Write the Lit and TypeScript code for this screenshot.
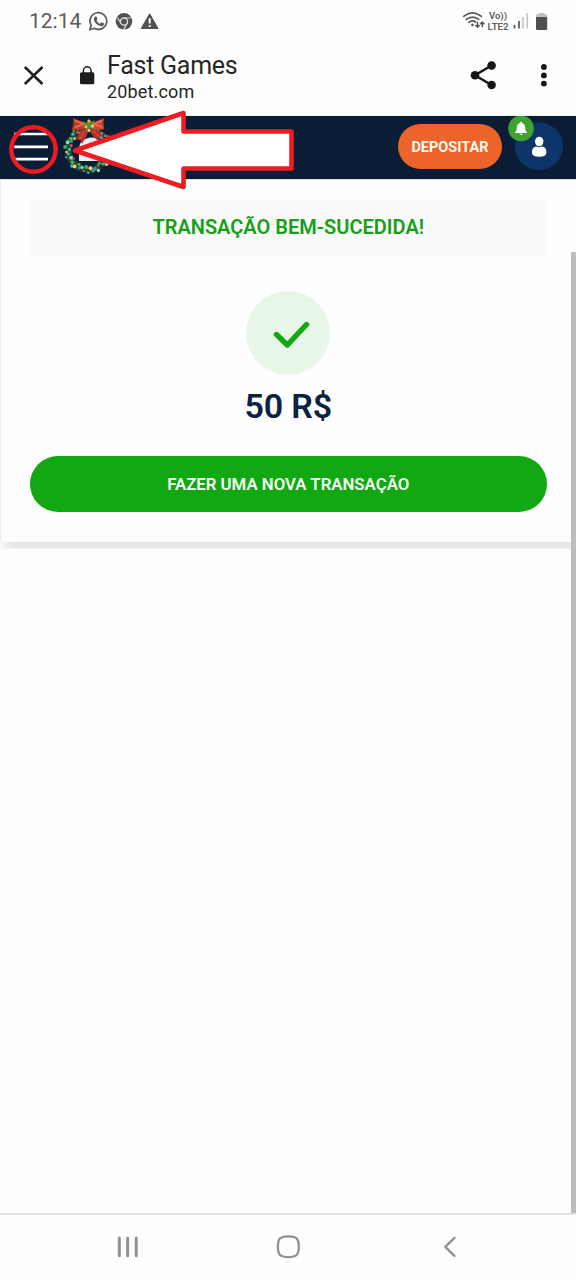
import { LitElement, html, svg, css } from 'lit';
import { customElement } from 'lit/decorators.js';

const lights = ['#46b7c9', '#3fae52', '#e0483a', '#8fdc9c', '#3a8fc4', '#49b356', '#f0c878'];

@customElement('status-bar')
class StatusBar extends LitElement {
  static styles = css`
    :host { display: flex; height: 42px; box-sizing: border-box; padding: 0 28px 0 29px; align-items: center; color: #5b5b5b; }
    .time { font-size: 21px; line-height: 24px; width: 59px; letter-spacing: 0; }
    svg { display: block; flex: none; }
    .space { flex: 1; }
    .volte { font-size: 9.6px; font-weight: 600; width: 24px; margin-left: 1px; white-space: nowrap; text-align: center; letter-spacing: 0; }
    .volte div { line-height: 11px; }
  `;
  render() {
    return html`
      <span class="time">12:14</span>
      <svg width="76" height="24" viewBox="88 9 76 24">
        <path d="M89.8 29.8 L91.1 25.2 A8.4 8.4 0 1 1 94.2 28.3 Z" fill="none" stroke="#5b5b5b" stroke-width="1.7" stroke-linejoin="round"/>
        <path d="M95.2 16.4 l1.2 0 1.1 2.7 -1 1.4 q1.5 2.5 3.6 3.3 l1.4 -1.5 2.6 1.3 q0 2.7 -2.9 2.7 q-3.3 -.5 -5.8 -3.3 q-3 -4.3 -.2 -6.6z" fill="#5b5b5b"/>
        <circle cx="124" cy="21.3" r="8.3" fill="#505050"/>
        <circle cx="124" cy="21.6" r="3.6" fill="none" stroke="#ddd" stroke-width="1.3"/>
        <path d="M124 18 H131 M121 23.4 L117.6 17.8 M127 23.4 L123.8 29.2" fill="none" stroke="#ddd" stroke-width="1.2"/>
        <path d="M149.7 13.8 L158 28.5 H141.2 Z" fill="#505050" stroke="#505050" stroke-width="1" stroke-linejoin="round"/>
        <path d="M149.7 18.2 V23.6 M149.7 25.2 V27" stroke="#fff" stroke-width="2"/>
      </svg>
      <span class="space"></span>
      <svg width="23" height="20" viewBox="462 11 23 20">
        <g fill="none" stroke="#555" stroke-width="1.7" stroke-linecap="round">
          <path d="M463.6 16.3 Q472.5 9.4 481.4 16.3"/>
          <path d="M466.3 19.4 Q472.5 14.7 478.7 19.4"/>
          <path d="M469 22.3 Q472.5 19.7 475.5 22"/>
        </g>
        <circle cx="472.4" cy="24.9" r="1.3" fill="#555"/>
        <path d="M477.5 21.8 V27 M475.4 25 L477.5 27.2 L479.6 25 M482.3 27.2 V22.2 M480.2 24.2 L482.3 22 L484.4 24.2" fill="none" stroke="#555" stroke-width="1.5"/>
      </svg>
      <div class="volte"><div>Vo))</div><div>LTE2</div></div>
      <svg width="38" height="20" viewBox="510 11 38 20">
        <path d="M514.5 25 V28.5 M519 21 V28.5" stroke="#555" stroke-width="1.7"/>
        <path d="M523 17 V28.5 M527.3 13 V28.5" stroke="#c4c4c4" stroke-width="1.6"/>
        <path d="M536 17 V15.4 Q536 14.3 537.2 14.3 H538.8 V13 H544.3 V14.3 H546 Q547.2 14.3 547.2 15.4 V17Z" fill="#c0c0c0"/>
        <path d="M536 17 H547.2 V28.7 Q547.2 30 546 30 H537.2 Q536 30 536 28.7Z" fill="#505050"/>
      </svg>
    `;
  }
}

@customElement('browser-bar')
class BrowserBar extends LitElement {
  static styles = css`
    :host { display: flex; height: 74px; box-sizing: border-box; padding: 0 25px 0 22px; align-items: flex-start; color: #262626; border-bottom: 1px solid #e9f1f5; }
    svg { display: block; flex: none; }
    .names { margin-left: 11px; padding-top: 8px; flex: 1; white-space: nowrap; }
    .title { font-size: 25px; line-height: 31px; letter-spacing: -0.25px; }
    .site { font-size: 18px; line-height: 21px; letter-spacing: 0.15px; }
  `;
  render() {
    return html`
      <svg width="74" height="66" viewBox="22 42 74 66">
        <path d="M24.8 67 L42.5 84 M42.5 67 L24.8 84" stroke="#202020" stroke-width="2.6"/>
        <rect x="80" y="72.3" width="14.3" height="12" rx="1.5" fill="#1d1d1d"/>
        <path d="M83.4 73 V70.6 a3.8 3.8 0 0 1 7.6 0 V73" fill="none" stroke="#1d1d1d" stroke-width="1.5"/>
      </svg>
      <div class="names">
        <div class="title">Fast Games</div>
        <div class="site">20bet.com</div>
      </div>
      <svg width="84" height="66" viewBox="467 42 84 66">
        <path d="M491.5 65.5 L475 75.2 L491.5 85" fill="none" stroke="#161616" stroke-width="2.5"/>
        <g fill="#161616">
          <circle cx="491.6" cy="65.5" r="4.3"/><circle cx="475" cy="75.2" r="4.3"/><circle cx="491.6" cy="85" r="4.3"/>
          <circle cx="543.9" cy="67" r="2.9"/><circle cx="543.9" cy="75.4" r="2.9"/><circle cx="543.9" cy="83.6" r="2.9"/>
        </g>
      </svg>
    `;
  }
}

@customElement('site-header')
class SiteHeader extends LitElement {
  static styles = css`
    :host { display: flex; height: 63px; background: #0b1d35; align-items: flex-start; border-bottom: 1px solid #d5e2ec; }
    svg { display: block; flex: none; }
    .space { flex: 1; }
    .deposit { margin: 8px 6px 0 0; width: 104px; height: 45px; border: 0; padding: 2px 0 0; border-radius: 23px; background: #ed642b; color: #fff8ee; font: 700 14.5px/43px Roboto, sans-serif; white-space: nowrap; text-align: center; }
    .account { margin-right: 7px; }
  `;
  render() {
    const dots = Array.from({ length: 56 }, (_, i) => {
      const a = i * 0.3366;
      const r = 17.5 + ((i * 7) % 5) * 1.45;
      return svg`<circle cx=${88.3 + r * Math.cos(a)} cy=${149.5 + r * Math.sin(a)} r=${1.3 + (i % 3) * 0.35} fill=${lights[(i * 3) % 7]}/>`;
    });
    return html`
      <svg width="130" height="63" viewBox="0 116 130 63">
        <path d="M14.3 134 H48 M14.3 146.8 H48 M14.3 159.2 H48" stroke="#fff" stroke-width="2.7"/>
        <circle cx="88.3" cy="149.5" r="20" fill="none" stroke="#1f4a35" stroke-width="6.5" stroke-dasharray="5 1.3"/>
        ${dots}
        <circle cx="91" cy="149" r="14" fill="#0b1d35"/>
        <path d="M79 161 V154 Q78 145 82 141 Q88 136 97 138 L104 144 V161Z" fill="#e9edf3"/>
        <path d="M85 126 Q79 132 76 140 L80.5 139.5 L82 144 Q86 138 89 130 Q92 136 98 141 L99 136.5 L104 137 Q100 130 92 126Z" fill="#b53224"/>
        <path d="M84 131 L80 139.5 M93 131 L98.5 136" stroke="#e2583e" stroke-width="1"/>
        <path d="M88 124 L73 118 Q74.5 124 71.5 129.5 Q80 131.5 88 126Z" fill="#c23a27"/>
        <path d="M90 124 L104 118 Q102.5 124 104.5 129 Q97 131 90 126Z" fill="#cf4430"/>
        <path d="M75 120.5 L84 124 L75 127.5 M102 120.5 L94 124 L102 127" fill="none" stroke="#f0714f" stroke-width="1.6"/>
        <path d="M82 121 L87 123 L88 118.5 L91 122 L95 120 L92 125 L96 130 L90 128 L86 133 L86 127 L81 128 L85 125Z" fill="#628b2d"/>
        <circle cx="89" cy="121" r="1.6" fill="#e6bd45"/><circle cx="92.5" cy="126" r="1.6" fill="#e8d48a"/><circle cx="86" cy="127" r="1.4" fill="#e2c262"/><circle cx="89" cy="130.5" r="1.2" fill="#f0e6cf"/>
      </svg>
      <span class="space"></span>
      <button class="deposit">DEPOSITAR</button>
      <svg class="account" width="61" height="63" viewBox="508 116 61 63">
        <circle cx="539" cy="146.3" r="24" fill="#0e3569"/>
        <ellipse cx="539.2" cy="141.5" rx="4.2" ry="4.8" fill="#fff"/>
        <path d="M532 152 Q531.8 147 536.6 146.4 Q539.2 148 541.8 146.4 Q546.6 147 546.4 152 Q547 156.8 539.2 156.8 Q531.4 156.8 532 152Z" fill="#fff"/>
        <circle cx="521" cy="128.4" r="12.8" fill="#3fa32f"/>
        <path d="M521 121.8 q1 0 1.2 1.2 q3 1.2 3 5 q0 3.4 1.8 4.3 v.8 h-12 v-.8 q1.8 -.9 1.8 -4.3 q0 -3.8 3 -5 q.2 -1.2 1.2 -1.2z" fill="#fff"/>
        <path d="M519.2 133.8 h3.6 q-1.8 2.4 -3.6 0z" fill="#fff"/>
      </svg>
    `;
  }
}

@customElement('nav-bar')
class NavBar extends LitElement {
  static styles = css`
    :host { display: flex; height: 67px; box-sizing: border-box; border-top: 2px solid #e3e3e3; justify-content: center; background: #fefefe; }
    svg { display: block; }
  `;
  render() {
    return html`
      <svg width="576" height="65" viewBox="0 1215 576 65" fill="none" stroke="#929292" stroke-linecap="round" stroke-linejoin="round">
        <path d="M119.3 1238 V1255.7 M127.6 1238 V1255.7 M136.2 1238 V1255.7" stroke-width="3"/>
        <path d="M288.3 1236.3 C296.5 1236.3 298.8 1238.5 298.8 1246.7 C298.8 1254.9 296.5 1257.1 288.3 1257.1 C280.1 1257.1 277.9 1254.9 277.9 1246.7 C277.9 1238.5 280.1 1236.3 288.3 1236.3Z" stroke-width="2.3"/>
        <path d="M454.5 1237.8 L445.3 1246.8 L454.5 1256" stroke-width="2.4"/>
      </svg>
    `;
  }
}

@customElement('app-root')
class AppRoot extends LitElement {
  static styles = css`
    :host { display: flex; flex-direction: column; position: relative; width: 576px; height: 1280px; overflow: hidden; background: #fefefe; font-family: Roboto, sans-serif; }
    .page { flex: 1; display: flex; min-height: 0; }
    .view { flex: 1; overflow: hidden; }
    .clip { height: 369px; overflow: hidden; }
    .card { height: 362px; box-sizing: border-box; border-left: 1px solid #ebebeb; border-radius: 0 0 0 4px; padding: 20px 24px 0 28.5px; background: #fefefe; box-shadow: 8px 7px 12px 4px rgba(0, 0, 0, 0.1); display: flex; flex-direction: column; align-items: center; white-space: nowrap; }
    .banner { width: 100%; height: 56px; background: #fafafa; color: #16a016; font-size: 20px; font-weight: 600; line-height: 54px; text-align: center; }
    .check { margin: 35px 1px 0 0; display: block; }
    .amount { margin-top: 11px; height: 40px; line-height: 40px; font-size: 34px; font-weight: 600; letter-spacing: -0.2px; color: #0a2341; }
    .again { margin-top: 30px; width: 100%; height: 56px; border: 0; padding: 0; border-radius: 28px; background: #11a812; color: #f7fff7; font: 600 16.8px/56px Roboto, sans-serif; }
    .rail { width: 5px; padding-top: 72px; display: flex; z-index: 1; }
    .thumb { flex: 1; background: #bdbdbd; }
    .marks { position: absolute; left: 0; top: 100px; pointer-events: none; }
  `;
  render() {
    return html`
      <status-bar></status-bar>
      <browser-bar></browser-bar>
      <site-header></site-header>
      <div class="page">
        <div class="view">
          <div class="clip">
            <div class="card">
              <div class="banner">TRANSAÇÃO BEM-SUCEDIDA!</div>
              <svg class="check" width="84" height="84" viewBox="246 291 84 84">
                <circle cx="288" cy="333" r="42" fill="#e7f6e7"/>
                <path d="M276.5 334.5 L287.3 345 L306.5 324.5" fill="none" stroke="#11a812" stroke-width="5.4" stroke-linecap="round" stroke-linejoin="round"/>
              </svg>
              <div class="amount">50 R$</div>
              <button class="again">FAZER UMA NOVA TRANSAÇÃO</button>
            </div>
          </div>
        </div>
        <div class="rail"><div class="thumb"></div></div>
      </div>
      <nav-bar></nav-bar>
      <svg class="marks" width="300" height="100" viewBox="0 100 300 100" stroke="#ed1c24">
        <circle cx="33.5" cy="149.5" r="22.2" fill="none" stroke-width="4.4"/>
        <path d="M75 150.5 L183.5 113 V131.5 H291.5 V168.5 H183.5 V187 Z" fill="#fff" stroke-width="4.6" stroke-linejoin="round"/>
      </svg>
    `;
  }
}
